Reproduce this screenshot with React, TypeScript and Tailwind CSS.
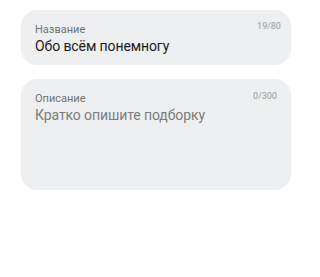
export default function App() {
  return (
    <div className="w-[312px] h-[277px] bg-white pt-[10px] px-[21px] flex flex-col gap-[14px]" style={{ fontFamily: "Roboto, 'Noto Sans', sans-serif" }}>
      <div className="relative h-[55px] rounded-[16px] bg-[#eeeff1] pl-[14px] pt-[13px]">
        <div className="text-[11px] leading-[14px] text-[#737373]">Название</div>
        <div className="text-[14px] leading-[18px] text-[#1c1c1c] tracking-[-0.1px]">Обо всём понемногу</div>
        <div className="absolute right-[10px] top-[10px] text-[9px] leading-[12px] font-medium text-[#ababab]">19/80</div>
      </div>
      <div className="relative h-[111px] rounded-[16px] bg-[#eeeff1] pl-[14px] pt-[13px]">
        <div className="text-[11px] leading-[14px] text-[#737373]">Описание</div>
        <div className="text-[14px] leading-[18px] text-[#7c7c7c] tracking-[-0.1px]">Кратко опишите подборку</div>
        <div className="absolute right-[14px] top-[11px] text-[9px] leading-[12px] font-medium text-[#ababab]">0/300</div>
      </div>
    </div>
  );
}
